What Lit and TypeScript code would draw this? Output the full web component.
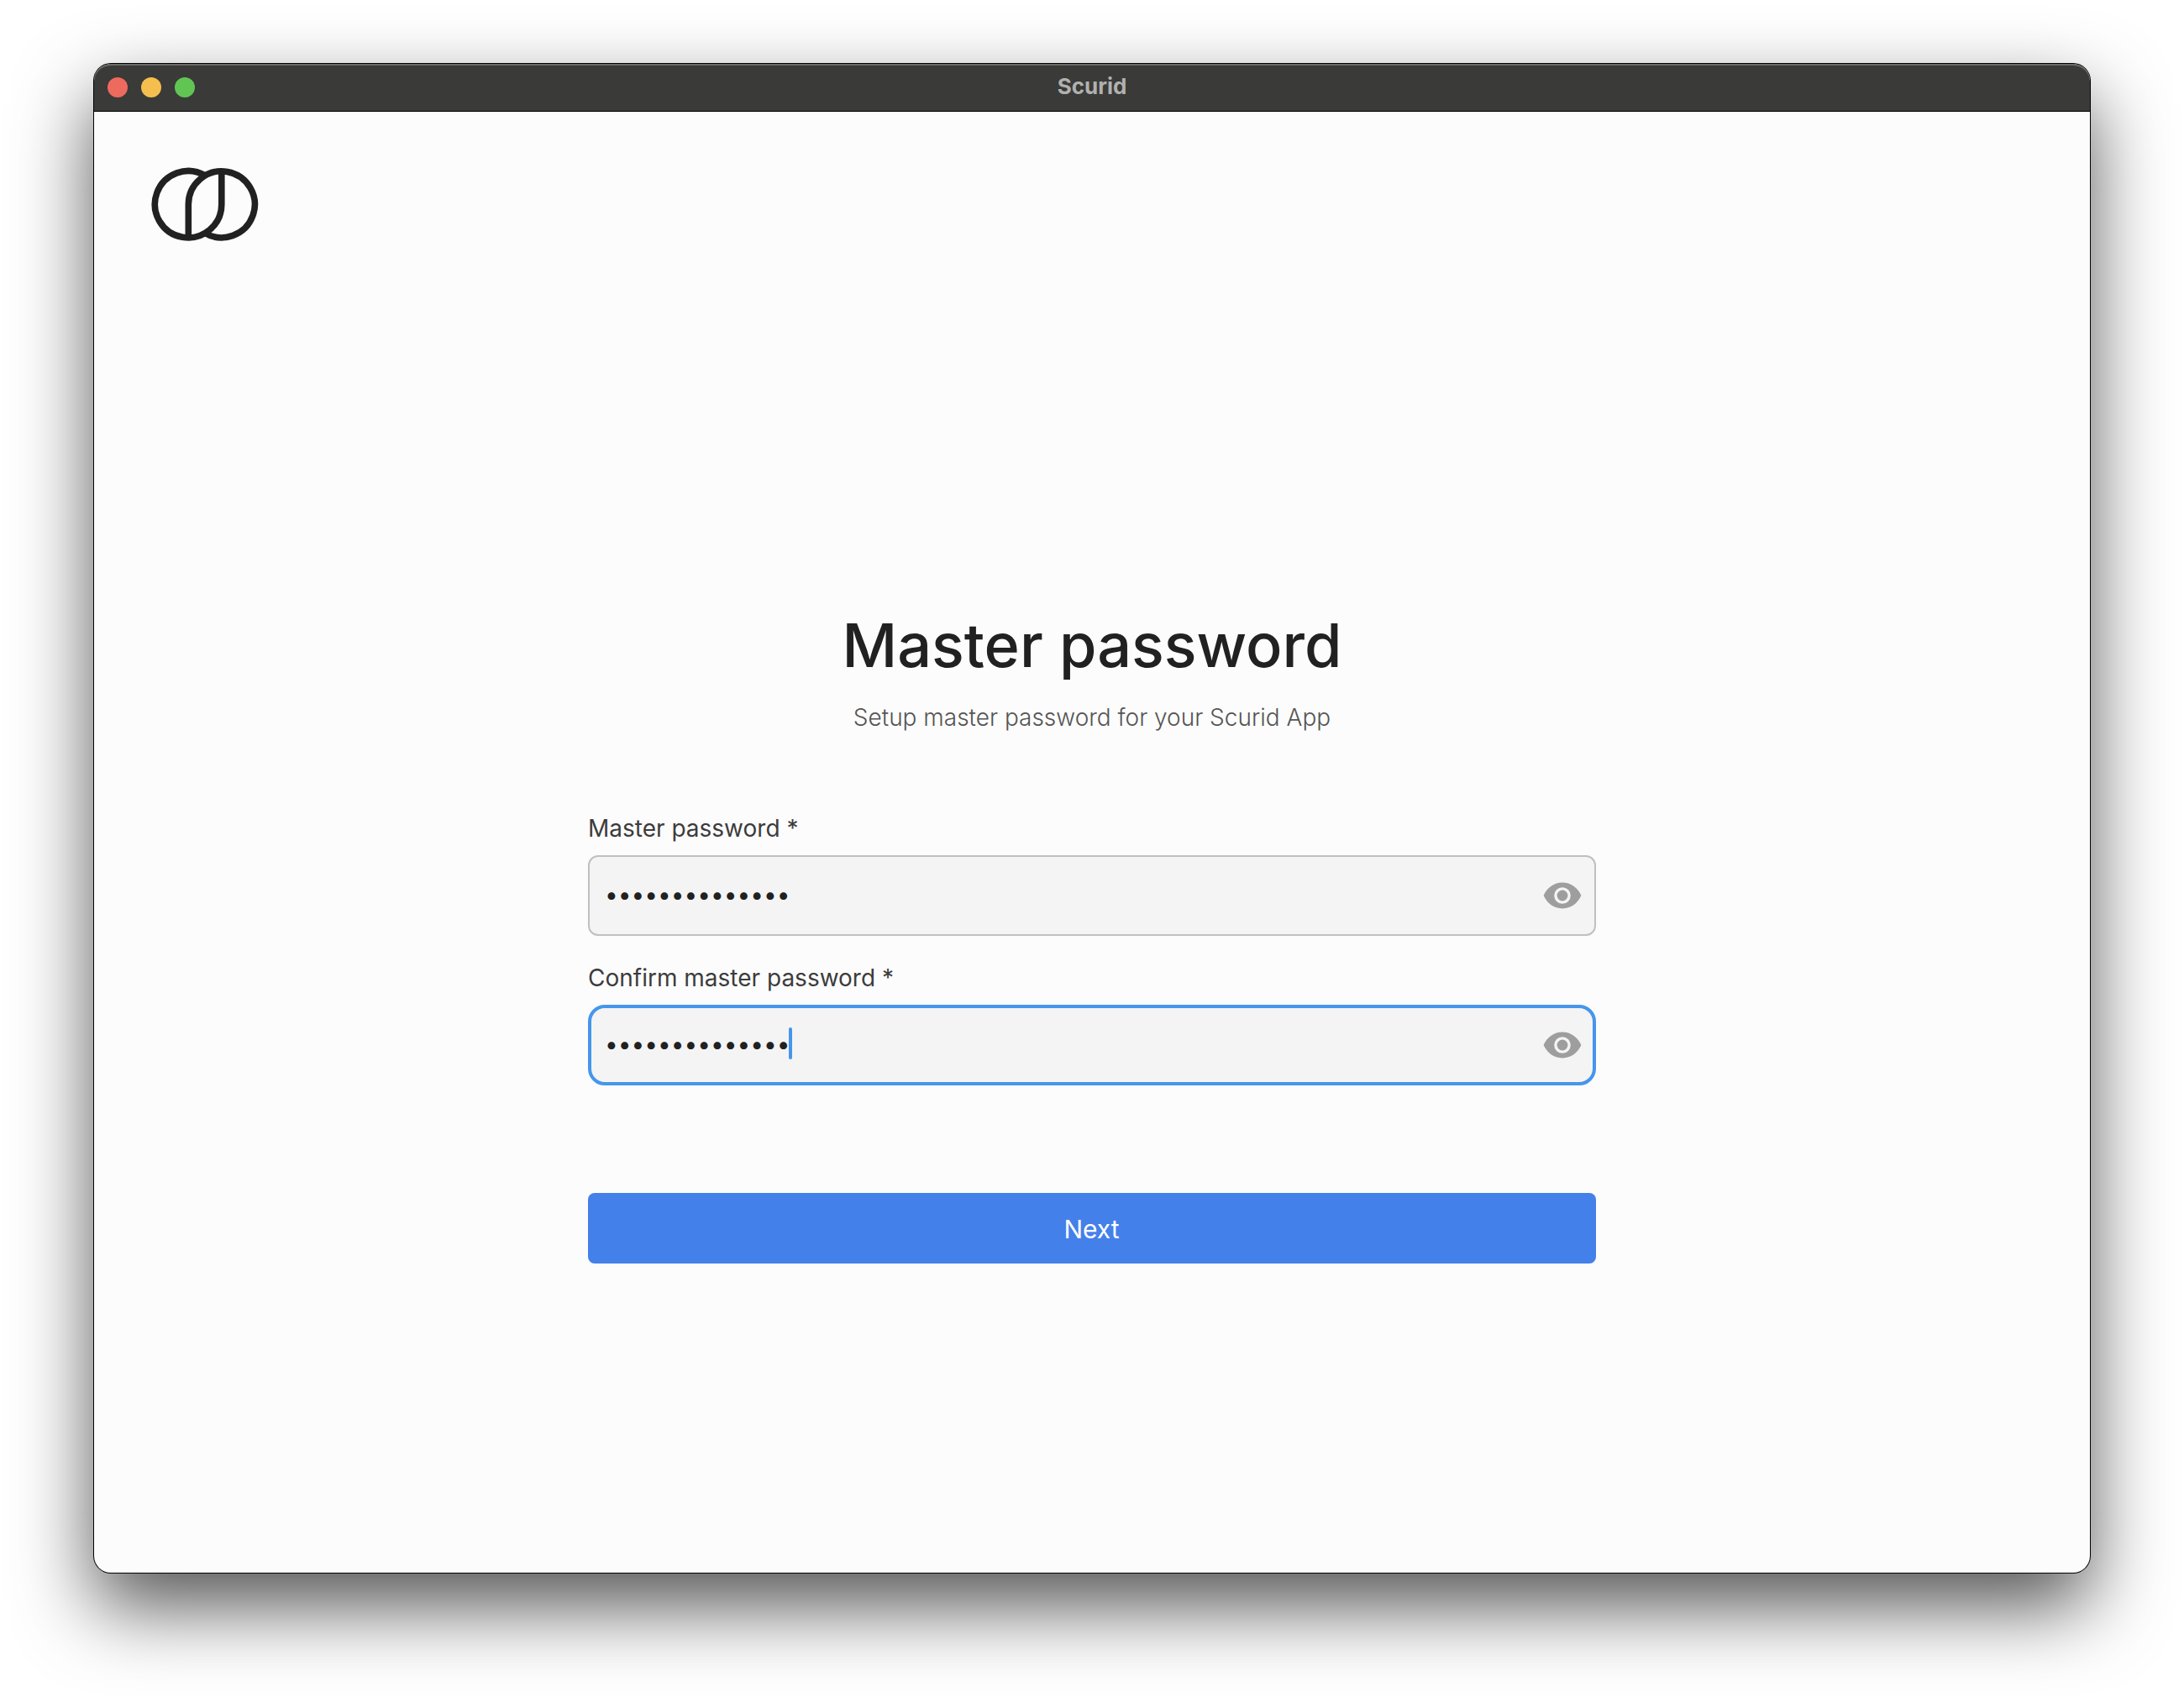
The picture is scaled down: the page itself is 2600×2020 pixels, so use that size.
import { LitElement, html, css } from "lit";
import { customElement, property } from "lit/decorators.js";

@customElement("password-field")
class PasswordField extends LitElement {
  static styles = css`
    :host { display: block; }
    .label {
      height: 34px; line-height: 34px; font-size: 28px; color: #3c3c3c; white-space: nowrap;
    }
    .box {
      box-sizing: border-box; height: 96px; margin-top: 15px;
      border: 2px solid #c0c0c0; border-radius: 12px; background: #f4f4f4;
      display: flex; align-items: center; padding: 0 14px 0 18px;
    }
    .box.focused { border: 4px solid #4596ec; border-radius: 20px; padding: 0 12px 0 16px; }
    .dots { display: flex; line-height: 34px; font-size: 28px; color: #212121; margin-top: -2px; }
    .dot { width: 15.76px; display: flex; justify-content: center; }
    .caret { width: 4px; height: 38px; margin: -4px 0 0 -2px; border-radius: 2px; background: #4596ec; }
    .eye { width: 48px; height: 48px; margin: -1px 0 0 auto; fill: #9e9e9e; }
  `;
  @property() label = "";
  @property({ type: Number }) length = 14;
  @property({ type: Boolean }) focused = false;

  render() {
    return html`
      <div class="label">${this.label}</div>
      <div class="box ${this.focused ? "focused" : ""}">
        <div class="dots">${Array.from({ length: this.length }, () => html`<span class="dot">•</span>`)}</div>
        ${this.focused ? html`<span class="caret"></span>` : ""}
        <svg class="eye" viewBox="0 0 24 24">
          <path fill-rule="evenodd" d="M.8 12C2.9 7.3 7 4.3 12 4.3S21.1 7.3 23.2 12C21.1 16.7 17 19.7 12 19.7S2.9 16.7.8 12zM12 7.1a4.9 4.9 0 1 0 0 9.8a4.9 4.9 0 1 0 0-9.8zM12 8.8a3.2 3.2 0 1 1 0 6.4a3.2 3.2 0 1 1 0-6.4z"/>
        </svg>
      </div>`;
  }
}

@customElement("app-root")
class AppRoot extends LitElement {
  static styles = css`
    :host {
      display: block; box-sizing: border-box; width: 2600px; height: 2020px;
      padding: 76px 112px 0; background: #fff; overflow: hidden;
      font-family: Inter, "Liberation Sans", sans-serif;
    }
    .window {
      display: flex; flex-direction: column; height: 1796px; border-radius: 20px;
      background: #fcfcfc;
      box-shadow: 0 0 0 1px #000, 0 40px 92px rgba(0, 0, 0, 0.67);
    }
    .titlebar {
      box-sizing: border-box; height: 57px; display: grid;
      grid-template-columns: 1fr auto 1fr; align-items: center;
      padding: 0 16px; background: #3a3a38; border-bottom: 1px solid #000;
      border-radius: 20px 20px 0 0; box-shadow: inset 0 2px 0 #6a6a69;
    }
    .lights { display: flex; gap: 16px; }
    .light { width: 24px; height: 24px; border-radius: 50%; }
    .red { background: #ed6a5e; }
    .yellow { background: #f5bf4f; }
    .green { background: #61c554; }
    .title { font-size: 26px; line-height: 32px; font-weight: 700; color: #b1b1b0; margin-top: -2px; }
    .content { display: flex; flex-direction: column; padding: 63px 0 0; }
    .logo { width: 136px; height: 96px; margin-left: 64px; fill: none; stroke: #212121; stroke-width: 7.6; }
    .form { width: 1200px; align-self: center; display: flex; flex-direction: column; padding-top: 432px; }
    .heading {
      margin: 0; font-size: 72px; line-height: 88px; font-weight: 500; color: #212121;
      text-align: center; white-space: nowrap;
    }
    .sub {
      margin: 25px 0 0; font-size: 28px; line-height: 34px; font-weight: 300; color: #555;
      text-align: center; white-space: nowrap;
    }
    .first { margin-top: 98px; }
    .second { margin-top: 33px; }
    .next {
      margin: 128px 0 0; height: 84px; border: 0; border-radius: 8px; background: #4480ea;
      color: #fff; font: 400 30px/36px Inter, "Liberation Sans", sans-serif; padding: 2px 1px 0 0;
    }
  `;

  render() {
    return html`
      <div class="window">
        <div class="titlebar">
          <div class="lights">
            <span class="light red"></span><span class="light yellow"></span><span class="light green"></span>
          </div>
          <div class="title">Scurid</div>
        </div>
        <div class="content">
          <svg class="logo" viewBox="176 196 136 96">
            <path d="M244.05 208.9A39.7 39.7 0 1 0 263.8 243.3V203.8"/>
            <path d="M244.05 277.5A39.5 39.5 0 1 0 224.3 243.3V282.8"/>
          </svg>
          <div class="form">
            <h1 class="heading">Master password</h1>
            <p class="sub">Setup master password for your Scurid App</p>
            <password-field class="first" label="Master password *"></password-field>
            <password-field class="second" label="Confirm master password *" focused></password-field>
            <button class="next">Next</button>
          </div>
        </div>
      </div>`;
  }
}
